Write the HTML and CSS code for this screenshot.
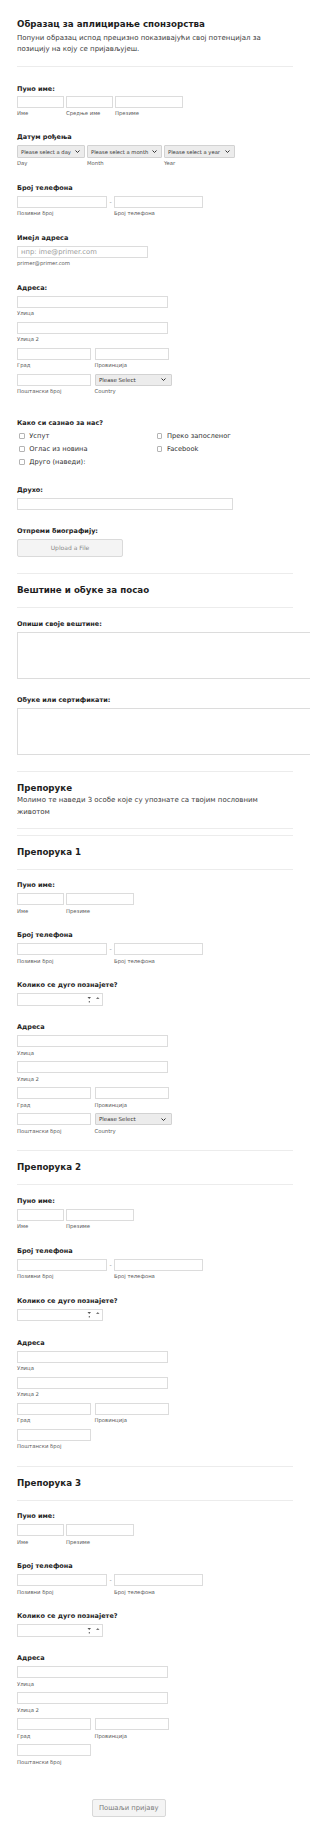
FILE: index.html
```html
<!DOCTYPE html>
<html lang="sr">
<head>
    <meta charset="UTF-8">
    <meta name="viewport" content="width=device-width, initial-scale=1.0">
    <title>Образац за аплицирање спонзорства</title>
    <link rel="stylesheet" href="styles.css">
</head>
<body>
<form class="form">
    <div class="header header-top">
        <h1 class="header-title">Образац за аплицирање спонзорства</h1>
        <p class="header-desc">Попуни образац испод прецизно показивајући свој потенцијал за<br>позицију на коју се пријављујеш.</p>
    </div>

    <div class="q q-name">
        <div class="label">Пуно име:</div>
        <div class="row">
            <div class="field w-name"><input class="input" type="text"><span class="sub">Име</span></div>
            <div class="field w-name"><input class="input" type="text"><span class="sub">Средње име</span></div>
            <div class="field w-name-last"><input class="input" type="text"><span class="sub">Презиме</span></div>
        </div>
    </div>

    <div class="q">
        <div class="label">Датум рођења</div>
        <div class="row row-date">
            <div class="field w-day">
                <div class="select select-date"><span>Please select a day</span><svg width="5" height="3" viewBox="0 0 5 3"><polyline points="0.5,0.5 2.5,2.5 4.5,0.5" fill="none" stroke="#333" stroke-width="1"/></svg></div>
                <span class="sub">Day</span>
            </div>
            <div class="field w-month">
                <div class="select select-date"><span>Please select a month</span><svg width="5" height="3" viewBox="0 0 5 3"><polyline points="0.5,0.5 2.5,2.5 4.5,0.5" fill="none" stroke="#333" stroke-width="1"/></svg></div>
                <span class="sub">Month</span>
            </div>
            <div class="field w-year">
                <div class="select select-date"><span>Please select a year</span><svg width="5" height="3" viewBox="0 0 5 3"><polyline points="0.5,0.5 2.5,2.5 4.5,0.5" fill="none" stroke="#333" stroke-width="1"/></svg></div>
                <span class="sub">Year</span>
            </div>
        </div>
    </div>

    <div class="q">
        <div class="label">Број телефона</div>
        <div class="row row-phone">
            <div class="field w-phone"><input class="input" type="text"><span class="sub">Позивни број</span></div>
            <span class="dash">-</span>
            <div class="field w-phone2"><input class="input" type="text"><span class="sub">Број телефона</span></div>
        </div>
    </div>

    <div class="q">
        <div class="label">Имејл адреса</div>
        <div class="field w-email"><input class="input" type="text" placeholder="нпр: ime@primer.com"><span class="sub">primer@primer.com</span></div>
    </div>

    <div class="q q-address-wide">
        <div class="label">Адреса:</div>
        <div class="addr-row"><div class="field w-street"><input class="input" type="text"><span class="sub">Улица</span></div></div>
        <div class="addr-row"><div class="field w-street"><input class="input" type="text"><span class="sub">Улица 2</span></div></div>
        <div class="addr-row">
            <div class="field w-half"><input class="input" type="text"><span class="sub">Град</span></div>
            <div class="field w-half"><input class="input" type="text"><span class="sub">Провинција</span></div>
        </div>
        <div class="addr-row">
            <div class="field w-half"><input class="input" type="text"><span class="sub">Поштански број</span></div>
            <div class="field w-country">
                <div class="select select-country"><span>Please Select</span><svg width="5" height="3" viewBox="0 0 5 3"><polyline points="0.5,0.5 2.5,2.5 4.5,0.5" fill="none" stroke="#333" stroke-width="1"/></svg></div>
                <span class="sub">Country</span>
            </div>
        </div>
    </div>

    <div class="q">
        <div class="label label-tight">Како си сазнао за нас?</div>
        <div class="checks">
            <div class="check"><span class="box"></span>Успут</div>
            <div class="check"><span class="box"></span>Преко запосленог</div>
            <div class="check"><span class="box"></span>Оглас из новина</div>
            <div class="check"><span class="box"></span>Facebook</div>
            <div class="check"><span class="box"></span>Друго (наведи):</div>
        </div>
    </div>

    <div class="q">
        <div class="label">Друхо:</div>
        <div class="field w-other"><input class="input" type="text"></div>
    </div>

    <div class="q">
        <div class="label">Отпреми биографију:</div>
        <button type="button" class="upload">Upload a File</button>
    </div>

    <div class="header">
        <h2 class="header-title">Вештине и обуке за посао</h2>
    </div>

    <div class="q q-area">
        <div class="label">Опиши своје вештине:</div>
        <textarea class="area"></textarea>
    </div>

    <div class="q q-area">
        <div class="label">Обуке или сертификати:</div>
        <textarea class="area"></textarea>
    </div>

    <div class="header">
        <h2 class="header-title">Препоруке</h2>
        <p class="header-desc">Молимо те наведи 3 особе које су упознате са твојим пословним<br>животом</p>
    </div>

    <div class="header">
        <h2 class="header-title">Препорука 1</h2>
    </div>

    <div class="q">
        <div class="label">Пуно име:</div>
        <div class="row">
            <div class="field w-name"><input class="input" type="text"><span class="sub">Име</span></div>
            <div class="field w-name-last"><input class="input" type="text"><span class="sub">Презиме</span></div>
        </div>
    </div>

    <div class="q">
        <div class="label">Број телефона</div>
        <div class="row row-phone">
            <div class="field w-phone"><input class="input" type="text"><span class="sub">Позивни број</span></div>
            <span class="dash">-</span>
            <div class="field w-phone2"><input class="input" type="text"><span class="sub">Број телефона</span></div>
        </div>
    </div>

    <div class="q">
        <div class="label">Колико се дуго познајете?</div>
        <div class="num">
            <svg width="13" height="7" viewBox="0 0 13 7"><path d="M0.5 1 H4 L2.25 3 Z" fill="#555"/><rect x="1.8" y="5" width="1" height="1.5" fill="#555"/><path d="M9 3 H12.5 L10.75 1 Z" fill="#777"/></svg>
        </div>
    </div>

    <div class="q">
        <div class="label">Адреса</div>
        <div class="addr-row"><div class="field w-street"><input class="input" type="text"><span class="sub">Улица</span></div></div>
        <div class="addr-row"><div class="field w-street"><input class="input" type="text"><span class="sub">Улица 2</span></div></div>
        <div class="addr-row">
            <div class="field w-half"><input class="input" type="text"><span class="sub">Град</span></div>
            <div class="field w-half"><input class="input" type="text"><span class="sub">Провинција</span></div>
        </div>
        <div class="addr-row">
            <div class="field w-half"><input class="input" type="text"><span class="sub">Поштански број</span></div>
            <div class="field w-country">
                <div class="select select-country"><span>Please Select</span><svg width="5" height="3" viewBox="0 0 5 3"><polyline points="0.5,0.5 2.5,2.5 4.5,0.5" fill="none" stroke="#333" stroke-width="1"/></svg></div>
                <span class="sub">Country</span>
            </div>
        </div>
    </div>

    <div class="header">
        <h2 class="header-title">Препорука 2</h2>
    </div>

    <div class="q">
        <div class="label">Пуно име:</div>
        <div class="row">
            <div class="field w-name"><input class="input" type="text"><span class="sub">Име</span></div>
            <div class="field w-name-last"><input class="input" type="text"><span class="sub">Презиме</span></div>
        </div>
    </div>

    <div class="q">
        <div class="label">Број телефона</div>
        <div class="row row-phone">
            <div class="field w-phone"><input class="input" type="text"><span class="sub">Позивни број</span></div>
            <span class="dash">-</span>
            <div class="field w-phone2"><input class="input" type="text"><span class="sub">Број телефона</span></div>
        </div>
    </div>

    <div class="q">
        <div class="label">Колико се дуго познајете?</div>
        <div class="num">
            <svg width="13" height="7" viewBox="0 0 13 7"><path d="M0.5 1 H4 L2.25 3 Z" fill="#555"/><rect x="1.8" y="5" width="1" height="1.5" fill="#555"/><path d="M9 3 H12.5 L10.75 1 Z" fill="#777"/></svg>
        </div>
    </div>

    <div class="q">
        <div class="label">Адреса</div>
        <div class="addr-row"><div class="field w-street"><input class="input" type="text"><span class="sub">Улица</span></div></div>
        <div class="addr-row"><div class="field w-street"><input class="input" type="text"><span class="sub">Улица 2</span></div></div>
        <div class="addr-row">
            <div class="field w-half"><input class="input" type="text"><span class="sub">Град</span></div>
            <div class="field w-half"><input class="input" type="text"><span class="sub">Провинција</span></div>
        </div>
        <div class="addr-row">
            <div class="field w-half"><input class="input" type="text"><span class="sub">Поштански број</span></div>
        </div>
    </div>

    <div class="header">
        <h2 class="header-title">Препорука 3</h2>
    </div>

    <div class="q">
        <div class="label">Пуно име:</div>
        <div class="row">
            <div class="field w-name"><input class="input" type="text"><span class="sub">Име</span></div>
            <div class="field w-name-last"><input class="input" type="text"><span class="sub">Презиме</span></div>
        </div>
    </div>

    <div class="q">
        <div class="label">Број телефона</div>
        <div class="row row-phone">
            <div class="field w-phone"><input class="input" type="text"><span class="sub">Позивни број</span></div>
            <span class="dash">-</span>
            <div class="field w-phone2"><input class="input" type="text"><span class="sub">Број телефона</span></div>
        </div>
    </div>

    <div class="q">
        <div class="label">Колико се дуго познајете?</div>
        <div class="num">
            <svg width="13" height="7" viewBox="0 0 13 7"><path d="M0.5 1 H4 L2.25 3 Z" fill="#555"/><rect x="1.8" y="5" width="1" height="1.5" fill="#555"/><path d="M9 3 H12.5 L10.75 1 Z" fill="#777"/></svg>
        </div>
    </div>

    <div class="q">
        <div class="label">Адреса</div>
        <div class="addr-row"><div class="field w-street"><input class="input" type="text"><span class="sub">Улица</span></div></div>
        <div class="addr-row"><div class="field w-street"><input class="input" type="text"><span class="sub">Улица 2</span></div></div>
        <div class="addr-row">
            <div class="field w-half"><input class="input" type="text"><span class="sub">Град</span></div>
            <div class="field w-half"><input class="input" type="text"><span class="sub">Провинција</span></div>
        </div>
        <div class="addr-row">
            <div class="field w-half"><input class="input" type="text"><span class="sub">Поштански број</span></div>
        </div>
    </div>

    <div class="submit-row">
        <button type="submit" class="submit">Пошаљи пријаву</button>
    </div>
</form>
</body>
</html>
```

FILE: styles.css
```css
* {
    box-sizing: border-box;
}
html {
    overflow-x: hidden;
}
body {
    margin: 0;
    background: #fff;
    font-family: "DejaVu Sans", Verdana, sans-serif;
    color: #2b2b2b;
}
.form {
    width: 310px;
    padding: 0 17px;
}

/* section headers */
.header {
    border-top: 1px solid #ececec;
    border-bottom: 1px solid #ececec;
    margin-top: 10.5px;
    padding: 9px 0 10px;
}
.header + .header {
    margin-top: 5.3px;
}
.header-top {
    border-top: none;
    margin-top: 0;
    margin-bottom: 7.1px;
    padding-top: 17.8px;
    padding-bottom: 9.9px;
}
.header-title {
    margin: 0;
    font-size: 8.7px;
    line-height: 14px;
    font-weight: bold;
    color: #1e1e1e;
}
.header-top .header-title {
    line-height: 13px;
}
.header-desc {
    margin: 0;
    font-size: 7px;
    line-height: 11.4px;
    color: #3a3a3a;
    white-space: nowrap;
}
.header-top .header-desc {
    margin-top: 2.2px;
}

/* questions */
.q {
    padding: 11.5px 0 6px;
}
.q-address-wide {
    padding-bottom: 13.5px;
}
.q-area {
    padding-bottom: 5.5px;
}
.label {
    font-size: 6.5px;
    line-height: 8px;
    font-weight: bold;
    color: #1e1e1e;
    margin-bottom: 4px;
}
.label-tight {
    margin-bottom: 2px;
}
.q-name .label {
    margin-bottom: 3px;
}
.q-name .sub {
    margin-top: 1.5px;
}
.row {
    display: flex;
    gap: 2.5px;
}
.row-date {
    gap: 2px;
}
.row-phone {
    gap: 0;
}
.addr-row {
    display: flex;
    gap: 3.5px;
}
.addr-row + .addr-row {
    margin-top: 5.5px;
}
.field {
    display: flex;
    flex-direction: column;
}
.input {
    display: block;
    width: 100%;
    height: 12px;
    margin: 0;
    padding: 0 3px;
    border: 1px solid #dcdcdc;
    border-radius: 0;
    background: #fff;
    font-family: "DejaVu Sans", Verdana, sans-serif;
    font-size: 6.8px;
    color: #333;
}
.input::placeholder {
    color: #9a9a9a;
}
.sub {
    font-size: 5.3px;
    line-height: 6px;
    margin-top: 2.5px;
    color: #5a5a5a;
    white-space: nowrap;
}
.dash {
    width: 7px;
    height: 12px;
    line-height: 12px;
    text-align: center;
    font-size: 6px;
    color: #888;
}

.w-name { width: 46.5px; }
.w-name-last { width: 68px; }
.w-day { width: 68px; }
.w-month { width: 75px; }
.w-year { width: 71px; }
.w-phone { width: 90px; }
.w-phone2 { width: 89px; }
.w-email { width: 131px; }
.w-street { width: 151px; }
.w-half { width: 74px; }
.w-country { width: 77px; }
.w-other { width: 216px; }

/* dropdowns */
.select {
    display: flex;
    align-items: center;
    justify-content: space-between;
    border: 1px solid #d2d2d2;
    border-radius: 1px;
    background: #ececec;
    color: #333;
    white-space: nowrap;
}
.select-date {
    height: 12.5px;
    padding: 0 4px 0 3px;
    font-size: 5.2px;
}
.select-country {
    height: 12px;
    padding: 0 5px 0 3.5px;
    font-size: 5.5px;
}

/* checkboxes */
.checks {
    display: grid;
    grid-template-columns: 137.7px auto;
    padding-left: 2px;
}
.check {
    display: flex;
    align-items: center;
    height: 13px;
    font-size: 6.7px;
    color: #333;
}
.box {
    width: 5.5px;
    height: 5.5px;
    margin-right: 4.8px;
    border: 1px solid #b4b4b4;
    border-radius: 1px;
    background: #fff;
}

/* number */
.num {
    display: flex;
    align-items: center;
    justify-content: flex-end;
    width: 86px;
    height: 12.5px;
    padding-right: 2px;
    border: 1px solid #dcdcdc;
}

/* buttons, areas */
.upload {
    display: block;
    width: 106px;
    height: 17.4px;
    padding: 0;
    border: 1px solid #dadada;
    border-radius: 2px;
    background: #f4f4f4;
    font-family: "DejaVu Sans", Verdana, sans-serif;
    font-size: 6px;
    color: #8a8a8a;
}
.area {
    display: block;
    width: 300px;
    height: 47.4px;
    margin: 0;
    border: 1px solid #dcdcdc;
    border-radius: 0;
    resize: none;
}
.submit-row {
    padding: 28.5px 0 12px 74.7px;
}
.submit {
    display: block;
    width: 74px;
    height: 17.6px;
    padding: 0;
    border: 1px solid #d8d8d8;
    border-radius: 2px;
    background: #f4f4f4;
    font-family: "DejaVu Sans", Verdana, sans-serif;
    font-size: 6.8px;
    color: #7a7a7a;
}
```
